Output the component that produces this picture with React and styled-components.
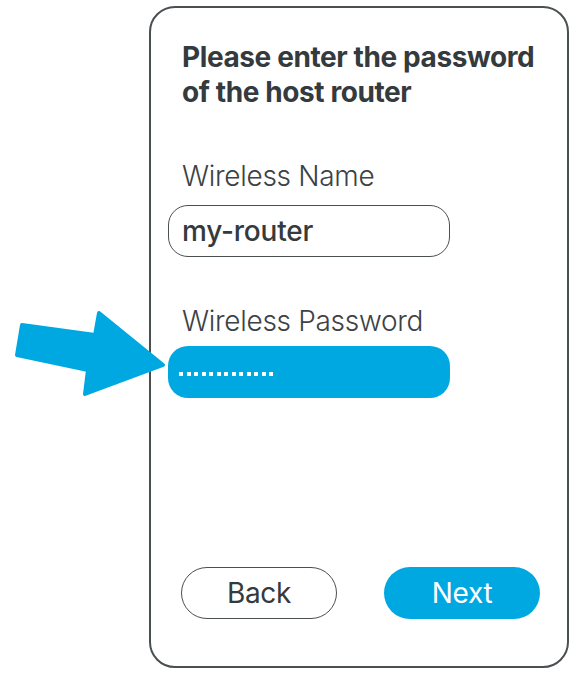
import React from "react";
import styled, { createGlobalStyle } from "styled-components";

const GlobalStyle = createGlobalStyle`
  body {
    margin: 0;
    background: #ffffff;
    font-family: "Inter", "Liberation Sans", sans-serif;
  }
`;

const BLUE = "#00a8e1";
const INK = "#343a3d";

const Page = styled.div`
  position: relative;
  width: 582px;
  height: 681px;
  padding: 6px 0 0 149px;
  box-sizing: border-box;
`;

const Card = styled.div`
  width: 420px;
  height: 662px;
  box-sizing: border-box;
  border: 2px solid #4a4f52;
  border-radius: 26px;
  padding: 32px 27px 47px 17px;
  display: flex;
  flex-direction: column;
`;

const Title = styled.h1`
  margin: 0 0 0 14px;
  font-size: 28px;
  line-height: 35px;
  font-weight: 700;
  letter-spacing: -0.4px;
  color: ${INK};
`;

const Label = styled.div`
  margin: ${(p) => p.$top}px 0 0 14px;
  font-size: 28px;
  line-height: 34px;
  font-weight: 300;
  letter-spacing: -0.3px;
  color: #3c4245;
`;

const Field = styled.div`
  margin-top: ${(p) => p.$top}px;
  width: 282px;
  height: 52px;
  box-sizing: border-box;
  border-radius: 20px;
  display: flex;
  align-items: center;
  padding-left: 13px;
  border: ${(p) => (p.$filled ? "none" : `1.5px solid #4a4f52`)};
  background: ${(p) => (p.$filled ? BLUE : "#fff")};
  font-size: 28px;
  font-weight: 500;
  letter-spacing: -0.2px;
  color: ${INK};
`;

const Dots = styled.div`
  display: flex;
  gap: 3.5px;
  margin-left: -2px;
  margin-top: 3px;
`;

const Dot = styled.span`
  width: 4px;
  height: 4px;
  background: #fff;
`;

const Spacer = styled.div`
  flex: 1;
`;

const Buttons = styled.div`
  display: flex;
  justify-content: space-between;
  padding-left: 13px;
`;

const Button = styled.div`
  width: 156px;
  height: 52px;
  box-sizing: border-box;
  border-radius: 26px;
  display: flex;
  align-items: center;
  justify-content: center;
  font-size: 28px;
  font-weight: 400;
  letter-spacing: -0.3px;
  border: ${(p) => (p.$primary ? "none" : "1.5px solid #4a4f52")};
  background: ${(p) => (p.$primary ? BLUE : "#fff")};
  color: ${(p) => (p.$primary ? "#fff" : INK)};
`;

const Arrow = styled.svg`
  position: absolute;
  left: 0;
  top: 300px;
  width: 170px;
  height: 100px;
`;

export default function App() {
  return (
    <Page>
      <GlobalStyle />
      <Card>
        <Title>
          Please enter the password
          <br />
          of the host router
        </Title>
        <Label $top={49}>Wireless Name</Label>
        <Field $top={12}>my-router</Field>
        <Label $top={47}>Wireless Password</Label>
        <Field $top={8} $filled>
          <Dots>
            {Array.from({ length: 13 }).map((_, i) => (
              <Dot key={i} />
            ))}
          </Dots>
        </Field>
        <Spacer />
        <Buttons>
          <Button>Back</Button>
          <Button $primary>Next</Button>
        </Buttons>
      </Card>
      <Arrow viewBox="0 300 170 100">
        <polygon
          points="22,325 95,335 99,313 163,365 85,394 88,370 17,355"
          fill={BLUE}
          stroke={BLUE}
          strokeWidth="4"
          strokeLinejoin="round"
        />
      </Arrow>
    </Page>
  );
}
